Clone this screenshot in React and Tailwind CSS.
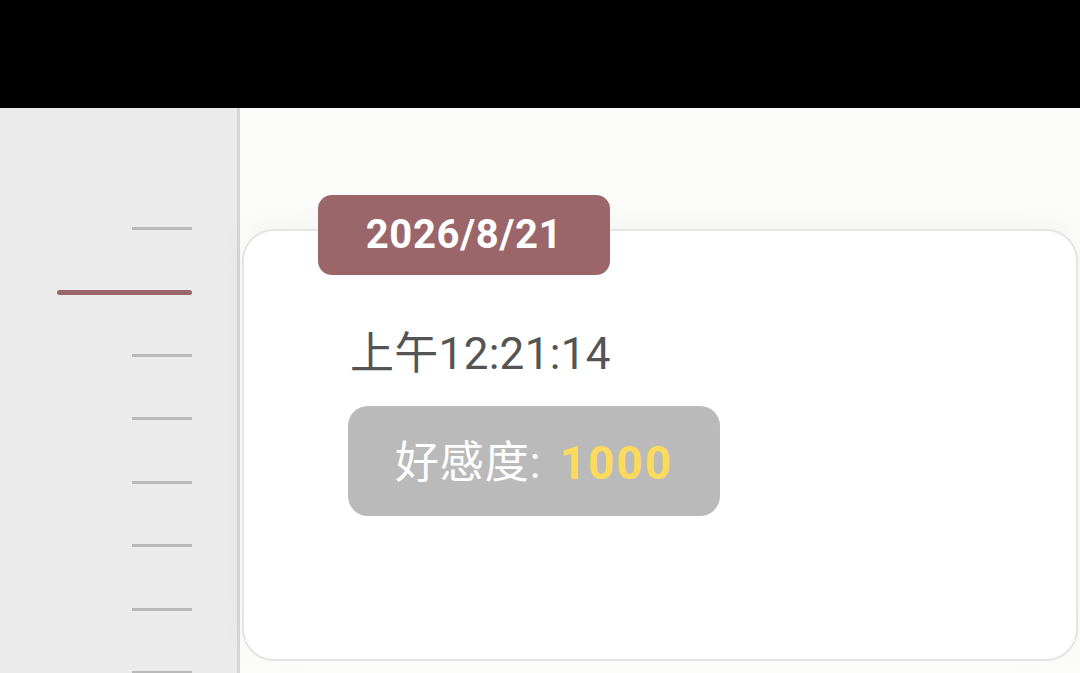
import React from "react";

const ticks = [false, true, false, false, false, false, false, false];

const App = () => {
  return (
    <div className="w-[1080px] h-[673px] overflow-hidden flex flex-col bg-black font-['Roboto','Noto_Sans_CJK_SC',sans-serif]">
      <div className="h-[108px] shrink-0 bg-black" />
      <div className="flex flex-1 min-h-0">
        <aside className="w-[240px] shrink-0 bg-[#ebebeb] border-r-[3px] border-[#d5d5d5] pt-[89px] pr-[45px]">
          {ticks.map((active, i) => (
            <div key={i} className="h-[63.4px] flex items-center justify-end">
              {active ? (
                <div className="w-[135px] h-[5px] rounded-full bg-[#9b6669]" />
              ) : (
                <div className="w-[60px] h-[3px] bg-[#b9b9b9]" />
              )}
            </div>
          ))}
        </aside>
        <main className="flex-1 bg-[#fcfcfb] px-[2px] pt-[121px]">
          <div className="relative h-[432px] rounded-[32px] border-2 border-[#e4e4e4] bg-white shadow-[0_-8px_30px_rgba(0,0,0,0.035)] pt-[97px] pl-[104px]">
            <div className="absolute left-[74px] top-[-36px] w-[292px] h-[80px] rounded-[14px] bg-[#9b6669] flex items-center justify-center">
              <span className="text-white font-bold text-[40px] leading-none tracking-[0.7px]">2026/8/21</span>
            </div>
            <div className="text-[44px] leading-[52px] text-[#545454] pl-[2px] tracking-[0.3px]">上午12:21:14</div>
            <div className="mt-[26px] w-[372px] h-[110px] rounded-[20px] bg-[#bababa] flex items-center justify-center leading-none pt-[4px]">
              <span className="text-white text-[44px] tracking-[1px]">好感度:</span>
              <span className="ml-[18px] text-[#fcdb5c] font-bold text-[46px] tracking-[2px]">1000</span>
            </div>
          </div>
        </main>
      </div>
    </div>
  );
};

export default App;
